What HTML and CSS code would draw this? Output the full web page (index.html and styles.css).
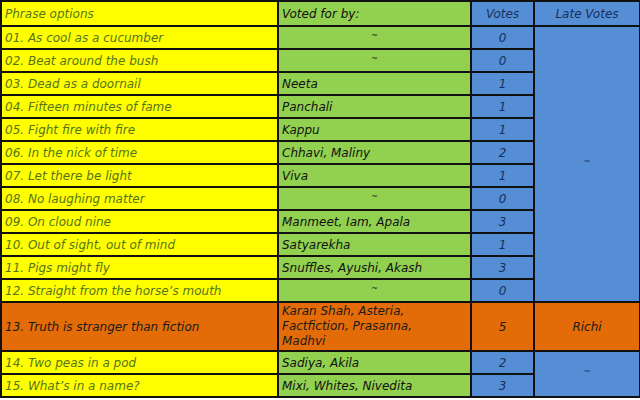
FILE: index.html
```html
<!DOCTYPE html>
<html>
<head>
<meta charset="utf-8">
<link rel="stylesheet" href="styles.css">
</head>
<body>
<table class="sheet">
  <colgroup>
    <col class="c-phrase">
    <col class="c-voters">
    <col class="c-votes">
    <col class="c-late">
  </colgroup>
  <tr class="hdr">
    <td class="phrase">Phrase options</td>
    <td class="voters">Voted for by:</td>
    <td class="votes">Votes</td>
    <td class="late">Late Votes</td>
  </tr>
  <tr>
    <td class="phrase">01. As cool as a cucumber</td>
    <td class="voters none"><span class="tilde">~</span></td>
    <td class="votes">0</td>
    <td class="late" rowspan="12"><span class="tilde">~</span></td>
  </tr>
  <tr>
    <td class="phrase">02. Beat around the bush</td>
    <td class="voters none"><span class="tilde">~</span></td>
    <td class="votes">0</td>
  </tr>
  <tr>
    <td class="phrase">03. Dead as a doornail</td>
    <td class="voters">Neeta</td>
    <td class="votes">1</td>
  </tr>
  <tr>
    <td class="phrase">04. Fifteen minutes of fame</td>
    <td class="voters">Panchali</td>
    <td class="votes">1</td>
  </tr>
  <tr>
    <td class="phrase">05. Fight fire with fire</td>
    <td class="voters">Kappu</td>
    <td class="votes">1</td>
  </tr>
  <tr>
    <td class="phrase">06. In the nick of time</td>
    <td class="voters">Chhavi, Maliny</td>
    <td class="votes">2</td>
  </tr>
  <tr>
    <td class="phrase">07. Let there be light</td>
    <td class="voters">Viva</td>
    <td class="votes">1</td>
  </tr>
  <tr>
    <td class="phrase">08. No laughing matter</td>
    <td class="voters none"><span class="tilde">~</span></td>
    <td class="votes">0</td>
  </tr>
  <tr>
    <td class="phrase">09. On cloud nine</td>
    <td class="voters">Manmeet, Iam, Apala</td>
    <td class="votes">3</td>
  </tr>
  <tr>
    <td class="phrase">10. Out of sight, out of mind</td>
    <td class="voters">Satyarekha</td>
    <td class="votes">1</td>
  </tr>
  <tr>
    <td class="phrase">11. Pigs might fly</td>
    <td class="voters">Snuffles, Ayushi, Akash</td>
    <td class="votes">3</td>
  </tr>
  <tr>
    <td class="phrase">12. Straight from the horse’s mouth</td>
    <td class="voters none"><span class="tilde">~</span></td>
    <td class="votes">0</td>
  </tr>
  <tr class="winner">
    <td class="phrase">13. Truth is stranger than fiction</td>
    <td class="voters">Karan Shah, Asteria, Factfiction, Prasanna, Madhvi</td>
    <td class="votes">5</td>
    <td class="late">Richi</td>
  </tr>
  <tr>
    <td class="phrase">14. Two peas in a pod</td>
    <td class="voters">Sadiya, Akila</td>
    <td class="votes">2</td>
    <td class="late" rowspan="2"><span class="tilde">~</span></td>
  </tr>
  <tr>
    <td class="phrase">15. What’s in a name?</td>
    <td class="voters">Mixi, Whites, Nivedita</td>
    <td class="votes">3</td>
  </tr>
</table>
</body>
</html>
```
FILE: styles.css
```css
html, body {
  margin: 0;
  padding: 0;
  background: #ffffff;
}

.sheet {
  border-collapse: collapse;
  table-layout: fixed;
  width: 639px;
  font-family: "DejaVu Sans", "Liberation Sans", sans-serif;
  font-style: italic;
  font-size: 12px;
}

.c-phrase { width: 277px; }
.c-voters { width: 193px; }
.c-votes { width: 63px; }
.c-late { width: 106px; }

.sheet td {
  border: 2px solid #111111;
  height: 21px;
  padding: 0 3px;
  vertical-align: middle;
  white-space: nowrap;
  overflow: hidden;
  line-height: 14px;
}

.sheet .hdr td {
  height: 23px;
}

.phrase {
  background: #ffff00;
  color: #55751a;
}

.voters {
  background: #92d050;
  color: #111111;
}

.voters.none {
  text-align: center;
}

.votes {
  background: #558ed5;
  color: #17305e;
  text-align: center;
}

.late {
  background: #558ed5;
  color: #17305e;
  text-align: center;
}

.tilde {
  font-size: 8px;
  color: #222222;
  position: relative;
  top: -3px;
}

.late .tilde {
  color: #17305e;
}

.sheet .winner td {
  background: #e36c09;
  color: #1a1a1a;
  height: 47px;
}

.sheet .winner .voters {
  white-space: normal;
  line-height: 15px;
  padding-right: 30px;
}
```
